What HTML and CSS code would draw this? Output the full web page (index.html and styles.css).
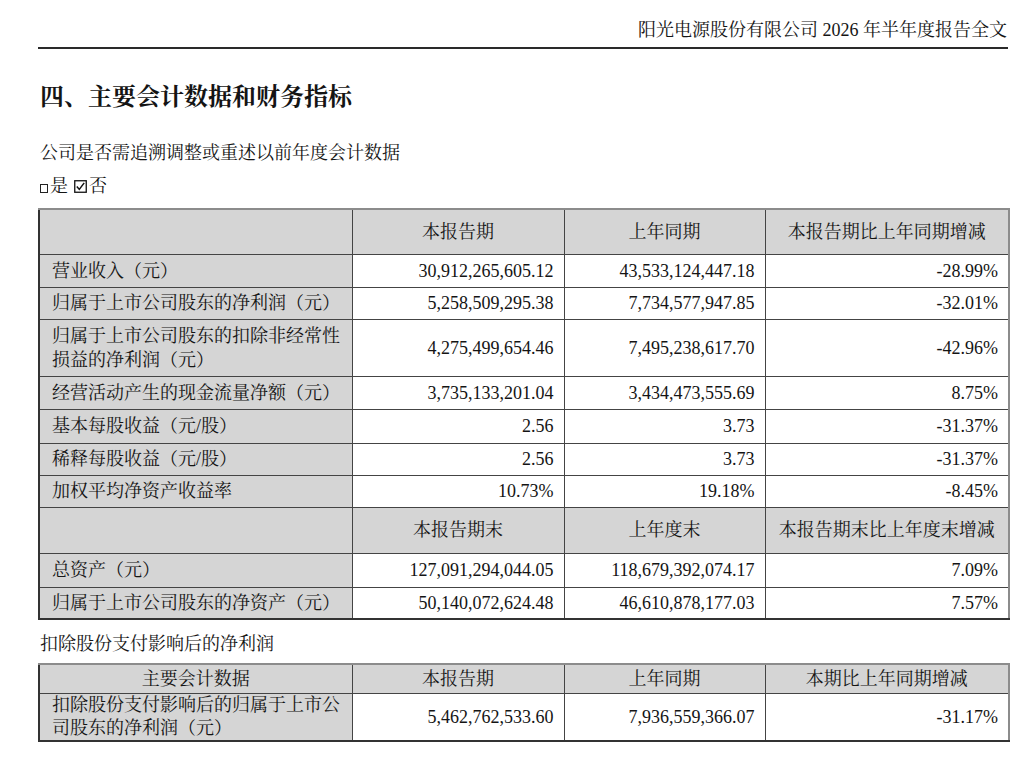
FILE: index.html
```html
<!DOCTYPE html>
<html lang="zh-CN">
<head>
<meta charset="utf-8">
<title>阳光电源股份有限公司 2026 年半年度报告全文</title>
<link rel="stylesheet" href="styles.css">
</head>
<body>
<div class="page">
  <header class="running-head">阳光电源股份有限公司 2026 年半年度报告全文</header>

  <h1 class="section-title">四、主要会计数据和财务指标</h1>

  <p class="question">公司是否需追溯调整或重述以前年度会计数据</p>
  <p class="options"><span class="box-empty"></span>是 <svg class="box-checked" width="13" height="13" viewBox="0 0 13 13"><rect x="0.75" y="0.75" width="11.5" height="11.5" fill="none" stroke="#111" stroke-width="1.3"/><path d="M2.8 6.6 L5.3 9.4 L10.2 2.9" fill="none" stroke="#111" stroke-width="1.5"/></svg>否</p>

  <table class="fin">
    <colgroup>
      <col class="c1"><col class="c2"><col class="c3"><col class="c4">
    </colgroup>
    <tr class="h-head">
      <td class="grey"></td>
      <td class="grey ctr">本报告期</td>
      <td class="grey ctr">上年同期</td>
      <td class="grey ctr">本报告期比上年同期增减</td>
    </tr>
    <tr class="r33">
      <td class="grey lbl">营业收入（元）</td>
      <td class="num">30,912,265,605.12</td>
      <td class="num">43,533,124,447.18</td>
      <td class="num">-28.99%</td>
    </tr>
    <tr class="r32">
      <td class="grey lbl">归属于上市公司股东的净利润（元）</td>
      <td class="num">5,258,509,295.38</td>
      <td class="num">7,734,577,947.85</td>
      <td class="num">-32.01%</td>
    </tr>
    <tr class="r57">
      <td class="grey lbl two">归属于上市公司股东的扣除非经常性<br>损益的净利润（元）</td>
      <td class="num">4,275,499,654.46</td>
      <td class="num">7,495,238,617.70</td>
      <td class="num">-42.96%</td>
    </tr>
    <tr class="r33">
      <td class="grey lbl">经营活动产生的现金流量净额（元）</td>
      <td class="num">3,735,133,201.04</td>
      <td class="num">3,434,473,555.69</td>
      <td class="num">8.75%</td>
    </tr>
    <tr class="r34">
      <td class="grey lbl">基本每股收益（元/股）</td>
      <td class="num">2.56</td>
      <td class="num">3.73</td>
      <td class="num">-31.37%</td>
    </tr>
    <tr class="r32">
      <td class="grey lbl">稀释每股收益（元/股）</td>
      <td class="num">2.56</td>
      <td class="num">3.73</td>
      <td class="num">-31.37%</td>
    </tr>
    <tr class="r32">
      <td class="grey lbl">加权平均净资产收益率</td>
      <td class="num">10.73%</td>
      <td class="num">19.18%</td>
      <td class="num">-8.45%</td>
    </tr>
    <tr class="r46">
      <td class="grey"></td>
      <td class="grey ctr">本报告期末</td>
      <td class="grey ctr">上年度末</td>
      <td class="grey ctr">本报告期末比上年度末增减</td>
    </tr>
    <tr class="r34">
      <td class="grey lbl">总资产（元）</td>
      <td class="num">127,091,294,044.05</td>
      <td class="num">118,679,392,074.17</td>
      <td class="num">7.09%</td>
    </tr>
    <tr class="r32">
      <td class="grey lbl">归属于上市公司股东的净资产（元）</td>
      <td class="num">50,140,072,624.48</td>
      <td class="num">46,610,878,177.03</td>
      <td class="num">7.57%</td>
    </tr>
  </table>

  <p class="subhead">扣除股份支付影响后的净利润</p>

  <table class="fin fin2">
    <colgroup>
      <col class="c1"><col class="c2"><col class="c3"><col class="c4">
    </colgroup>
    <tr class="r30">
      <td class="grey ctr">主要会计数据</td>
      <td class="grey ctr">本报告期</td>
      <td class="grey ctr">上年同期</td>
      <td class="grey ctr">本期比上年同期增减</td>
    </tr>
    <tr class="r46b">
      <td class="grey lbl two tight">扣除股份支付影响后的归属于上市公<br>司股东的净利润（元）</td>
      <td class="num">5,462,762,533.60</td>
      <td class="num">7,936,559,366.07</td>
      <td class="num">-31.17%</td>
    </tr>
  </table>
</div>
</body>
</html>
```

FILE: styles.css
```css
html, body {
  margin: 0;
  padding: 0;
  background: #ffffff;
}

body {
  font-family: "Liberation Serif", "Noto Serif CJK SC", "Noto Sans CJK SC", serif;
  color: #141414;
  font-size: 18px;
}

.page {
  width: 970px;
  margin-left: 38px;
}

.running-head {
  padding-top: 18px;
  padding-bottom: 5px;
  line-height: 24px;
  height: 24px;
  text-align: right;
  font-size: 18px;
  border-bottom: 2px solid #2a2a2a;
  padding-right: 1px;
}

.section-title {
  margin: 33px 0 0 2px;
  font-size: 24px;
  line-height: 30px;
  font-weight: bold;
}

.question {
  margin: 29px 0 0 2px;
  line-height: 24px;
}

.options {
  margin: 9px 0 0 2px;
  line-height: 24px;
  display: flex;
  align-items: center;
}

.box-empty {
  display: inline-block;
  width: 6px;
  height: 7px;
  border: 1px solid #222;
  margin-right: 2px;
  margin-top: 5px;
}

.box-checked {
  margin-left: 6px;
  margin-right: 2px;
  margin-top: 1px;
}

.fin {
  margin-top: 10px;
  margin-left: 0;
  width: 970px;
  border-collapse: collapse;
  table-layout: fixed;
  border-top: 2px solid #8c8c8c;
  border-right: 2px solid #8c8c8c;
  border-left: 2px solid #333;
  border-bottom: 2px solid #333;
}

.fin col.c1 { width: 313px; }
.fin col.c2 { width: 212px; }
.fin col.c3 { width: 201px; }
.fin col.c4 { width: 244px; }

.fin td {
  border: 1px solid #444;
  padding: 0 10px 0 12px;
  line-height: 24px;
  vertical-align: middle;
  white-space: nowrap;
  overflow: hidden;
}

.fin td.grey {
  background: #d5d5d5;
}

.fin td.ctr {
  text-align: center;
  padding: 0 4px;
}

.fin td.num {
  text-align: right;
  padding-right: 10px;
}

.fin td.lbl {
  text-align: left;
}

.fin td.two {
  white-space: normal;
}

.fin td.tight {
  line-height: 23px;
}

.h-head { height: 45px; }
.r30 { height: 29px; }
.r32 { height: 32px; }
.r33 { height: 33px; }
.r34 { height: 34px; }
.r46 { height: 46px; }
.r46b { height: 46px; }
.r57 { height: 57px; }

.subhead {
  margin: 12px 0 0 2px;
  line-height: 24px;
}

.fin2 {
  margin-top: 7px;
}
```
